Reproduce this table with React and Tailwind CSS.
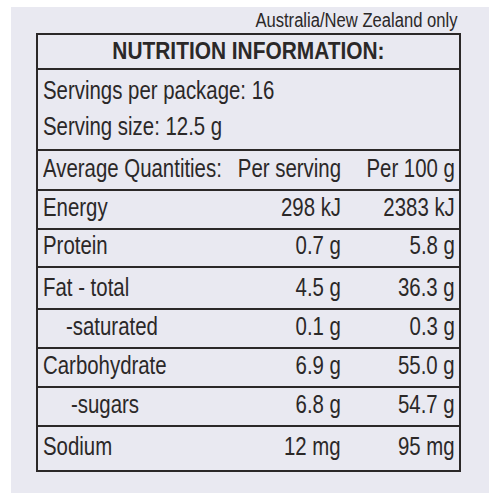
const line = 'border-[#2b2828]'

// Condensed look: a regular face squeezed horizontally.
function T({ children, origin = 'origin-left', scale = 'scale-x-[0.77]' }) {
  return <span className={`inline-block whitespace-nowrap ${scale} ${origin}`}>{children}</span>
}

function Row({ label, serving, per100, indent = 'pl-[5px]', h, last }) {
  return (
    <div className={`flex items-end ${h} ${last ? `pb-[9px]` : `pb-[6px] border-b-2 ${line}`}`}>
      <div className={`w-[170px] shrink-0 flex ${indent}`}>
        <T>{label}</T>
      </div>
      <div className="w-[133px] shrink-0 flex justify-end">
        <T origin="origin-right">{serving}</T>
      </div>
      <div className="w-[114px] shrink-0 flex justify-end">
        <T origin="origin-right">{per100}</T>
      </div>
    </div>
  )
}

const rows = [
  { label: 'Energy', serving: '298 kJ', per100: '2383 kJ', h: 'h-[39px]' },
  { label: 'Protein', serving: '0.7 g', per100: '5.8 g', h: 'h-[38px]' },
  { label: 'Fat - total', serving: '4.5 g', per100: '36.3 g', h: 'h-[42px]' },
  { label: '-saturated', serving: '0.1 g', per100: '0.3 g', indent: 'pl-[28px]', h: 'h-[39px]' },
  { label: 'Carbohydrate', serving: '6.9 g', per100: '55.0 g', h: 'h-[39px]' },
  { label: '-sugars', serving: '6.8 g', per100: '54.7 g', indent: 'pl-[33px]', h: 'h-[39px]' },
  { label: 'Sodium', serving: '12 mg', per100: '95 mg', h: 'h-[43px]', last: true },
]

export default function App() {
  return (
    <div className="w-[500px] h-[500px] bg-white pt-[7px] pl-[11px]" style={{ fontFamily: '"Liberation Sans", Arial, sans-serif' }}>
      <div className="w-[478px] h-[486px] bg-[#e9e9f1] text-[#2b2828]">
        <div className="h-[26px] flex justify-end pr-[32px] text-[20px] leading-[26px]">
          <T origin="origin-right" scale="scale-x-[0.83]">Australia/New Zealand only</T>
        </div>
        <div className={`ml-[25px] w-[425px] border-2 ${line} text-[26.5px] leading-[30px]`}>
          <div className={`h-[35px] border-b-2 ${line} flex items-end justify-center pb-[3px] text-[24px] font-bold leading-[28px]`}>
            <T origin="origin-center" scale="scale-x-[0.87]">NUTRITION INFORMATION:</T>
          </div>
          <div className={`h-[81px] border-b-2 ${line} pl-[5px] pt-[5px]`}>
            <div className="h-[36px]"><T>Servings per package: 16</T></div>
            <div className="h-[36px]"><T>Serving size: 12.5 g</T></div>
          </div>
          <Row label="Average Quantities:" serving="Per serving" per100="Per 100 g" h="h-[40px]" />
          {rows.map((r) => (
            <Row key={r.label} {...r} />
          ))}
        </div>
      </div>
    </div>
  )
}
